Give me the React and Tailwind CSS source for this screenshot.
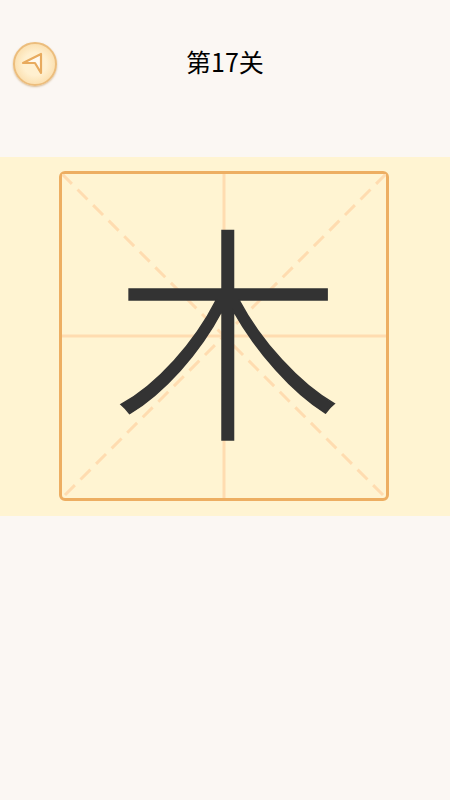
export default function App() {
  const cjk = { fontFamily: '"Noto Sans CJK SC", sans-serif' };
  return (
    <div className="min-h-[800px] w-[450px] bg-[#fbf7f3] font-['Noto_Sans_CJK_SC',sans-serif]">
      <header className="relative flex h-[157px] justify-center pt-[43px]">
        <button className="absolute left-[13px] top-[42px] flex h-[44px] w-[44px] items-center justify-center rounded-full border-2 border-[#ecbd7c] bg-[radial-gradient(circle,#fff0d0_40%,#fbdfae_75%,#f3c98a_100%)] shadow-[0_1px_2px_rgba(180,130,60,0.5)]">
          <svg width="44" height="44" viewBox="0 0 44 44" fill="#fffaf0" stroke="#e8ab5e" strokeWidth="2.2" strokeLinejoin="round" className="shrink-0">
            <path d="M10 21 L28 12 L28 31 L22 21 Z" />
          </svg>
        </button>
        <h1 className="text-[25px] leading-[36px] font-normal text-black">第17关</h1>
      </header>
      <section className="flex h-[359px] justify-center bg-[#fff4d2] pt-[14px]">
        <div className="relative ml-[-2px] flex h-[330px] w-[330px] items-center justify-center rounded-[6px] border-[3px] border-[#edae62]">
          <svg className="absolute inset-0 h-full w-full" viewBox="0 0 324 324" fill="none" stroke="#ffdcb0">
            <line x1="0" y1="0" x2="324" y2="324" strokeWidth="3" strokeDasharray="14 8" />
            <line x1="324" y1="0" x2="0" y2="324" strokeWidth="3" strokeDasharray="14 8" />
            <line x1="162" y1="0" x2="162" y2="324" strokeWidth="3" />
            <line x1="0" y1="162" x2="324" y2="162" strokeWidth="3" />
          </svg>
          <span style={cjk} className="relative mt-[-28px] ml-[8px] text-[230px] leading-none font-light text-[#333333] [-webkit-text-stroke:1.5px_#333333]">木</span>
        </div>
      </section>
    </div>
  );
}
